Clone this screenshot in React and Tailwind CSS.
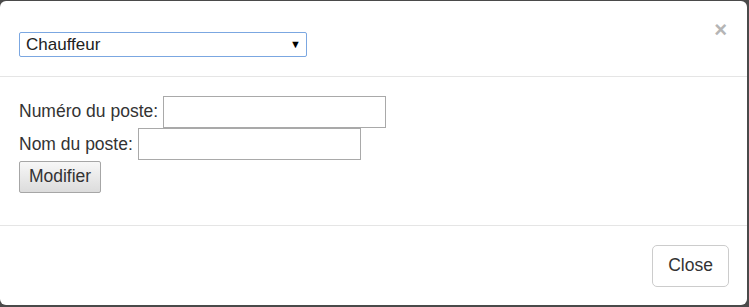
export default function App() {
  return (
    <div
      className="w-[749px] h-[307px] bg-[#4a4a4a] pt-px pr-[2px] pb-[2px]"
      style={{ fontFamily: '"Liberation Sans", Arial, sans-serif' }}
    >
      <div className="h-full bg-white rounded-[6px] flex flex-col text-[#333]">
        {/* Header */}
        <div className="h-[76px] border-b border-[#e5e5e5] flex items-start justify-between pl-[19px] pr-[20px] pt-[31px]">
          <div className="w-[288px] h-[25px] border border-[#7ba7e1] rounded-[2px] flex items-center justify-between pl-[6px] pr-[5px] bg-white">
            <span className="text-[17px] text-[#222] leading-none">Chauffeur</span>
            <span className="text-[11px] text-black leading-none">▼</span>
          </div>
          <span className="text-[22px] font-bold text-[#b5b5b5] leading-none -mt-[13px]">×</span>
        </div>

        {/* Body */}
        <div className="flex-1 px-[19px] pt-[18px] text-[17.5px] text-[#333]">
          <div className="flex items-center h-[33px]">
            <span>Numéro du poste:</span>
            <div className="ml-[5px] w-[223px] h-[32px] border border-[#a9a9a9] bg-white" />
          </div>
          <div className="flex items-center h-[32px]">
            <span>Nom du poste:</span>
            <div className="ml-[5px] w-[223px] h-[32px] border border-[#a9a9a9] bg-white" />
          </div>
          <div className="flex items-center h-[33px]">
            <div className="w-[82px] h-[32px] border border-[#a6a6a6] rounded-[2px] bg-gradient-to-b from-[#f7f7f7] to-[#dcdcdc] flex items-center justify-center text-[#333]">
              Modifier
            </div>
          </div>
        </div>

        {/* Footer */}
        <div className="h-[80px] border-t border-[#e5e5e5] flex items-center justify-end pr-[18px]">
          <div className="w-[77px] h-[42px] border border-[#ccc] rounded-[5px] flex items-center justify-center text-[17.5px] text-[#333]">
            Close
          </div>
        </div>
      </div>
    </div>
  );
}
